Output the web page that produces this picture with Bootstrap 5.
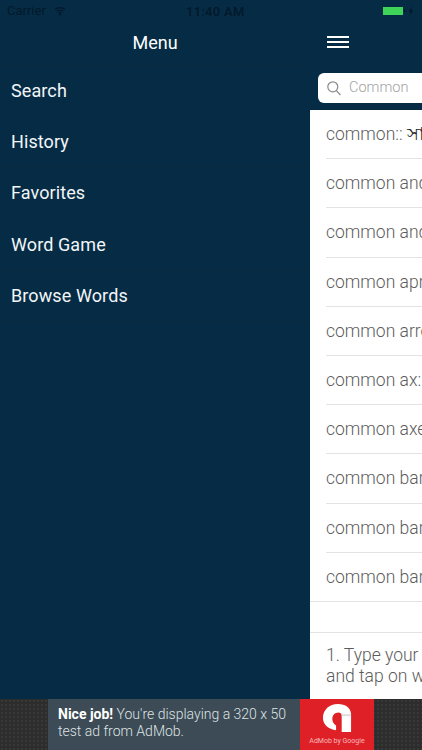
<!DOCTYPE html>
<html lang="en">

<head>
    <meta charset="UTF-8">
    <meta name="viewport" content="width=device-width, initial-scale=1.0">
    <title>Dictionary Menu</title>
    <link href="https://cdn.jsdelivr.net/npm/bootstrap@5.3.0/dist/css/bootstrap.min.css" rel="stylesheet">
    <style>
        html, body { height: 750px; overflow: hidden; }
        body { font-family: Roboto, "Noto Sans", sans-serif; background: #062c45; }
        .app-shell { width: 422px; height: 750px; position: relative; }
        .app-top { height: 699px; }
        .status-strip { position: absolute; top: 0; left: 0; width: 422px; height: 22px; color: #02182a; font-size: 13px; padding: 0 6px 0 7px; z-index: 2; }
        .status-time { position: absolute; left: 186px; top: 2px; font-weight: 500; font-size: 13px; letter-spacing: .3px; }
        .side-menu { width: 310px; background: #062c45; color: #fff; padding-top: 20px; flex: none; }
        .menu-title { height: 46px; font-size: 18px; border-bottom: 1px solid #0a2a40; }
        .menu-row { height: 51.2px; font-size: 18px; padding-left: 11px; padding-bottom: 1px; border-bottom: 1px solid #0a2a40; letter-spacing: .1px; color: #f2f6f8; }
        .main-pane { width: 112px; background: #062c45; flex: none; overflow: hidden; }
        .main-head { height: 65px; padding: 36px 0 0 17px; }
        .burger { width: 22px; height: 12px; border-top: 2px solid #fff; border-bottom: 2px solid #fff; position: relative; }
        .burger::after { content: ""; position: absolute; left: 0; right: 0; top: 3px; height: 2px; background: #fff; }
        .search-wrap { height: 45px; padding: 8px 0 0 8px; }
        .search-field { width: 130px; height: 30px; background: #fff; border-radius: 6px; padding-left: 9px; gap: 8px; color: #a2a2a2; font-size: 14.5px; font-weight: 300; }
        .word-list { background: #fff; height: 589px; color: #5c5c5c; font-weight: 300; font-size: 17.5px; white-space: nowrap; }
        .word-row { height: 49.2px; padding-left: 16px; }
        .word-row span { display: block; width: 96px; line-height: 48px; overflow: hidden; border-bottom: 1px solid #e3e3e3; height: 49.2px; }
        .word-row span b { font-weight: 400; color: #222; font-family: "Noto Sans", "DejaVu Sans", sans-serif; line-height: 1; }
        .blank-row { height: 32px; border-top: 1px solid #e3e3e3; border-bottom: 1px solid #e3e3e3; margin-top: -1px; }
        .help-text { padding: 12px 0 0 16px; line-height: 21px; width: 300px; }
        .ad-strip { height: 51px; background-color: #2d2d2d; background-image: radial-gradient(#383838 1px, transparent 1px); background-size: 4px 4px; }
        .ad-inner { width: 326px; height: 51px; background: #3c4b55; }
        .ad-copy { width: 252px; padding: 7px 0 0 10px; color: #dfe3e6; font-size: 14px; line-height: 17px; font-weight: 300; }
        .ad-copy strong { color: #fff; font-weight: 700; }
        .ad-badge { width: 74px; height: 51px; background: #e02027; color: #f6b9bb; }
        .ad-badge small { font-size: 7px; line-height: 8px; white-space: nowrap; margin-top: 4px; }
    </style>
</head>

<body>
    <div class="app-shell d-flex flex-column">
        <div class="status-strip d-flex align-items-center">
            <span>Carrier</span>
            <svg class="ms-2" width="12" height="10" viewBox="0 0 14 10" fill="none" stroke="#02182a" stroke-width="1.5">
                <path d="M1 3.4C4.5 .3 9.5 .3 13 3.4" />
                <path d="M3.2 5.6C5.4 3.7 8.6 3.7 10.8 5.6" />
                <path d="M5.3 7.6C6.3 6.8 7.7 6.8 8.7 7.6" />
                <circle cx="7" cy="9" r=".6" />
            </svg>
            <span class="status-time">11:40 AM</span>
            <svg class="ms-auto" width="33" height="10" viewBox="0 0 33 10">
                <rect x="0" y="1" width="20" height="8" fill="#3ed45a" />
                <rect x="21" y="3.5" width="1.3" height="3" fill="#02182a" />
                <path d="M29 .5L25.6 5.6H27.6L26.8 9.5L30.2 4.4H28.2Z" fill="#02182a" />
            </svg>
        </div>

        <div class="app-top d-flex">
            <nav class="side-menu">
                <div class="menu-title d-flex align-items-center justify-content-center">Menu</div>
                <div class="menu-row d-flex align-items-center">Search</div>
                <div class="menu-row d-flex align-items-center">History</div>
                <div class="menu-row d-flex align-items-center">Favorites</div>
                <div class="menu-row d-flex align-items-center">Word Game</div>
                <div class="menu-row d-flex align-items-center">Browse Words</div>
            </nav>

            <div class="main-pane">
                <div class="main-head">
                    <div class="burger"></div>
                </div>
                <div class="search-wrap">
                    <div class="search-field d-flex align-items-center">
                        <svg width="14" height="15" viewBox="0 0 14 15" fill="none" stroke="#8a8a8a" stroke-width="1.2">
                            <circle cx="5.8" cy="5.8" r="5" />
                            <path d="M9.4 9.6L13.4 14" />
                        </svg>
                        <span>Common</span>
                    </div>
                </div>
                <div class="word-list" id="wordList">
                    <div class="word-row"><span>common:: <b>সাধারণ</b></span></div>
                </div>
            </div>
        </div>

        <div class="ad-strip d-flex justify-content-center">
            <div class="ad-inner d-flex">
                <div class="ad-copy"><strong>Nice job!</strong> You're displaying a 320 x 50 test ad from AdMob.</div>
                <div class="ad-badge d-flex flex-column align-items-center">
                    <svg class="mt-1" width="30" height="30" viewBox="0 0 32 32">
                        <path d="M31 31H21V13C21 11 19.5 10 17.5 10C13.5 10 11 13 11 17C11 20 12.5 22.5 15 24V29C7 28 1 23 1 16C1 7 8 1 17 1C25 1 31 5 31 12Z" fill="#fff" />
                        <path d="M21 12L31 12V14L21 14Z" fill="#dcdcdc" />
                    </svg>
                    <small>AdMob by Google</small>
                </div>
            </div>
        </div>
    </div>

    <script src="https://cdn.jsdelivr.net/npm/bootstrap@5.3.0/dist/js/bootstrap.bundle.min.js"></script>
    <script>
        const wordList = document.getElementById("wordList");
        const words = ["common and garden", "common and preferred", "common apron", "common arrow", "common ax::", "common axe", "common barberry", "common barley", "common barn"];

        words.forEach(word => {
            wordList.insertAdjacentHTML("beforeend", `<div class="word-row"><span>${word}</span></div>`);
        });
        wordList.insertAdjacentHTML("beforeend", `<div class="blank-row"></div>`);
        wordList.insertAdjacentHTML("beforeend", `<div class="help-text">1. Type your word<br>and tap on word</div>`);
    </script>
</body>

</html>
